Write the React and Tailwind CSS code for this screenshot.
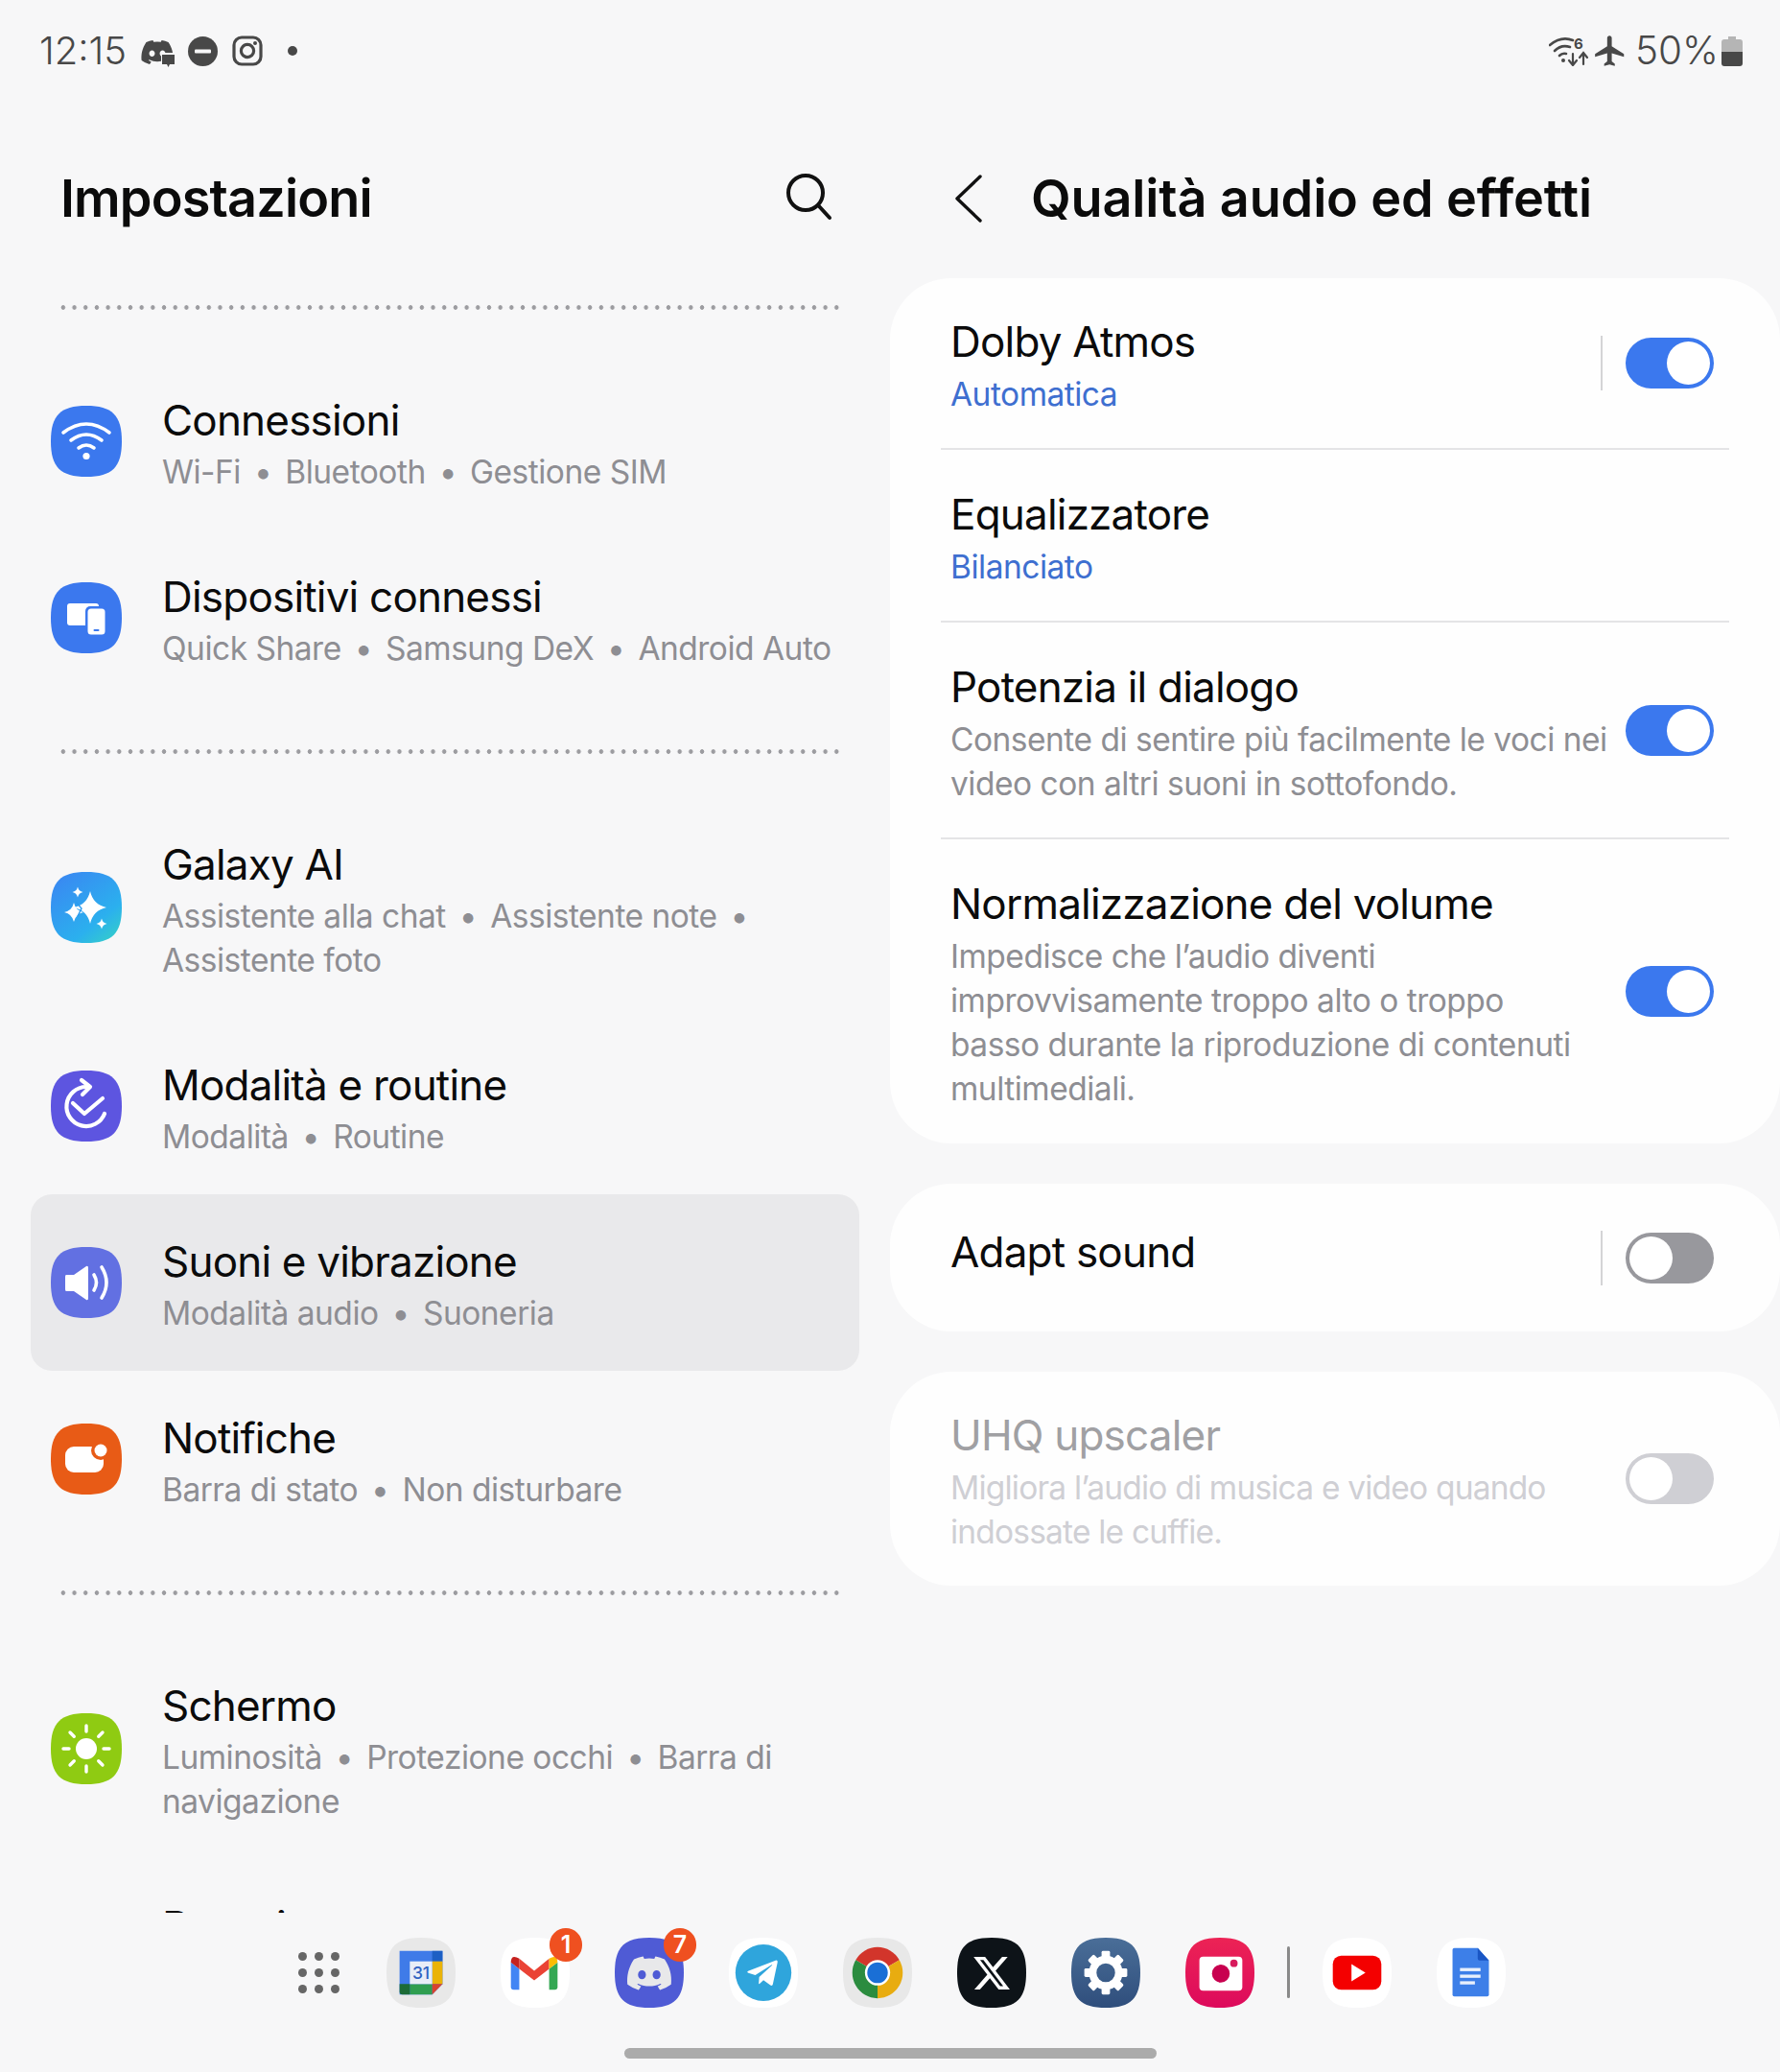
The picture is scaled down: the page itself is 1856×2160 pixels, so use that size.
import React from "react";
import { FaDiscord, FaTelegramPlane } from "react-icons/fa";
import { FaXTwitter } from "react-icons/fa6";
import { MdFlight } from "react-icons/md";

const SQ = "M37 0C64 0 74 10 74 37C74 64 64 74 37 74C10 74 0 64 0 37C0 10 10 0 37 0Z";

function Squircle({ fill = "#fff", size = 74, children, defs, stroke }) {
  return (
    <svg width={size} height={size} viewBox="0 0 74 74" className="shrink-0">
      {defs}
      <path d={SQ} fill={fill} stroke={stroke} strokeWidth={stroke ? 1 : 0} />
      {children}
    </svg>
  );
}

const WifiIcon = () => (
  <Squircle fill="#3b78ee">
    <g fill="none" stroke="#fff" strokeWidth="3.6" strokeLinecap="round">
      <path d="M13 28Q37 10 61 28" />
      <path d="M21 36Q37 24 53 36" />
      <path d="M29 44Q37 38 45 44" />
    </g>
    <circle cx="37" cy="52.5" r="3.6" fill="#fff" />
  </Squircle>
);
const DevicesIcon = () => (
  <Squircle fill="#3b78ee">
    <rect x="17" y="22" width="33" height="23" rx="3" fill="#fff" />
    <rect x="36" y="25" width="23" height="32" rx="5" fill="#3b78ee" />
    <rect x="38.5" y="27.5" width="18" height="27" rx="3.5" fill="#fff" />
    <rect x="44.5" y="49" width="6" height="2" rx="1" fill="#3b78ee" />
  </Squircle>
);
const star = (cx, cy, r) =>
  `M${cx} ${cy - r}Q${cx + r * 0.18} ${cy - r * 0.18} ${cx + r} ${cy}Q${cx + r * 0.18} ${cy + r * 0.18} ${cx} ${cy + r}Q${cx - r * 0.18} ${cy + r * 0.18} ${cx - r} ${cy}Q${cx - r * 0.18} ${cy - r * 0.18} ${cx} ${cy - r}Z`;
const AiIcon = () => (
  <Squircle
    fill="url(#aig)"
    defs={
      <defs>
        <linearGradient id="aig" x1="0.1" y1="0" x2="0.9" y2="1">
          <stop offset="0" stopColor="#3a86f2" />
          <stop offset="0.7" stopColor="#2bb0ee" />
          <stop offset="1" stopColor="#35cfc8" />
        </linearGradient>
      </defs>
    }
  >
    <path d={star(41, 37, 17)} fill="#fff" />
    <path d={star(24, 42, 10)} fill="#fff" />
    <path d={star(28, 21, 5.5)} fill="#fff" />
    <path d={star(53, 54, 5.5)} fill="#fff" />
    <path d="M26 31L32 38L28 46" fill="none" stroke="#2a9bf0" strokeWidth="1.4" />
  </Squircle>
);
const ModesIcon = () => (
  <Squircle fill="#5d55e0">
    <g fill="none" stroke="#fff" strokeWidth="4.2" strokeLinecap="round" strokeLinejoin="round">
      <path d="M37 17A20.5 20.5 0 1 0 56 45" />
      <path d="M32 10L41 17L33 25" />
      <path d="M23 34L35 45L54 29" />
    </g>
  </Squircle>
);
const SoundIcon = () => (
  <Squircle fill="#6270e2">
    <path d="M16 29Q15 29 15 31V44Q15 46 16 46H24L37 55Q39 56 39 53V22Q39 19 37 20L24 29Z" fill="#fff" />
    <g fill="none" stroke="#fff" strokeWidth="3.6" strokeLinecap="round">
      <path d="M45 29Q50 37 45 45" />
      <path d="M53 21Q63 37 53 53" />
    </g>
  </Squircle>
);
const NotifIcon = () => (
  <Squircle fill="#e85b16">
    <rect x="15" y="24" width="40" height="27" rx="9" fill="#fff" />
    <circle cx="52" cy="28" r="10" fill="#e85b16" />
    <circle cx="52" cy="28" r="6.5" fill="#fff" />
  </Squircle>
);
const SunIcon = () => (
  <Squircle fill="#8fcb12">
    <circle cx="37" cy="37" r="11" fill="#fff" />
    {[0, 45, 90, 135, 180, 225, 270, 315].map((a) => (
      <line key={a} x1="37" y1="13" x2="37" y2="19" stroke="#fff" strokeWidth="3.4" strokeLinecap="round" transform={`rotate(${a} 37 37)`} />
    ))}
  </Squircle>
);

function Dotted() {
  return (
    <div className="h-[95px] flex items-center pl-[60px] pr-[50px]">
      <div className="w-full h-[5px] bg-[radial-gradient(circle,#9c9ca0_2px,transparent_2.6px)] [background-size:11.7px_5px]" />
    </div>
  );
}

function Sub({ lines }) {
  return (
    <div className="text-[33.5px] tracking-[-0.5px] leading-[46px] text-[#8e8e93] whitespace-nowrap">
      {lines.map((parts, i) => (
        <div key={i}>
          {parts.map((p, j) => (
            <span key={j}>
              {j > 0 && <span className="inline-block mx-[14px]">•</span>}
              {p}
            </span>
          ))}
          {parts.trail && <span className="inline-block ml-[14px]">•</span>}
        </div>
      ))}
    </div>
  );
}

function Row({ icon, title, lines, tall, selected }) {
  return (
    <div
      className={
        (tall ? "h-[230px] " : "h-[184px] ") +
        (selected ? "bg-[#e9e9eb] " : "") +
        "mx-[32px] pl-[21px] rounded-[22px] flex items-center gap-[42px]"
      }
    >
      {icon}
      <div className="pt-[4px]">
        <div className="text-[44px] tracking-[-0.8px] leading-[56px] text-[#0b0b0b] mb-[3px] whitespace-nowrap">{title}</div>
        <Sub lines={lines} />
      </div>
    </div>
  );
}

function Toggle({ on, disabled }) {
  const track = on ? "bg-[#3b78ee] justify-end" : disabled ? "bg-[#cfcfd4] justify-start" : "bg-[#98989d] justify-start";
  return (
    <div className={"w-[92px] h-[53px] rounded-full flex items-center px-[4px] shrink-0 " + track}>
      <div className="w-[45px] h-[45px] rounded-full bg-white" />
    </div>
  );
}

function SetRow({ h, title, blue, desc, toggle, divider, last, disabled, lift }) {
  return (
    <div className={h + " pl-[10px] pr-[16px] flex items-center justify-between " + (last ? "" : "border-b-2 border-[#e4e4e6]")}>
      <div className={(lift ? "pb-[12px]" : "pt-[5px]") + " whitespace-nowrap"}>
        <div className={"text-[44px] tracking-[-0.8px] leading-[56px] " + (disabled ? "text-[#a0a0a3]" : "text-[#0b0b0b]")}>{title}</div>
        {blue && <div className="mt-[4px] text-[33.5px] tracking-[-0.5px] leading-[46px] text-[#3e6fd0]">{blue}</div>}
        {desc && (
          <div className={"mt-[4px] text-[33.5px] leading-[46px] " + (disabled ? "tracking-[-0.8px] text-[#cfcfd4]" : "tracking-[-0.5px] text-[#8e8e93]")}>
            {desc.map((d) => (
              <div key={d}>{d}</div>
            ))}
          </div>
        )}
      </div>
      {toggle && (
        <div className="flex items-center gap-[24px]">
          {divider && <div className="w-[2px] h-[57px] bg-[#d4d4d6]" />}
          <Toggle on={toggle === "on"} disabled={disabled} />
        </div>
      )}
    </div>
  );
}

function Dock72({ fill, children, overlay, badge, defs }) {
  return (
    <div className="relative w-[72px] h-[73px] shrink-0 flex items-center justify-center">
      <svg width="72" height="73" viewBox="0 0 74 74" preserveAspectRatio="none" className="absolute inset-0">
        {defs}
        <path d={SQ} fill={fill} />
        {children}
      </svg>
      {overlay && <div className="relative flex items-center justify-center">{overlay}</div>}
      {badge && (
        <div className="absolute top-[-10px] right-[-13px] w-[34px] h-[35px] rounded-full bg-[#ef5020] text-white text-[25px] font-semibold leading-none flex items-center justify-center">
          {badge}
        </div>
      )}
    </div>
  );
}

export default function App() {
  return (
    <div className="w-[1856px] h-[2160px] bg-[#f7f7f8] overflow-hidden flex flex-col [font-family:Inter,'Noto_Sans',sans-serif]">
      {/* status bar */}
      <div className="h-[106px] shrink-0 pl-[41px] pr-[39px] flex items-center justify-between text-[#484848]">
        <div className="flex items-center">
          <span className="text-[40px] font-light leading-none w-[105px]">12:15</span>
          <div className="relative w-[36px] h-[30px] flex items-center mt-[3px]">
            <FaDiscord size={37} color="#484848" />
            <svg width="15" height="17" viewBox="0 0 15 17" className="absolute right-[-1px] bottom-[-2px]">
              <rect x="0" y="0" width="15" height="17" fill="#f7f7f8" />
              <path d="M1 2H14V12H9L7.5 15L6 12H1Z" fill="#484848" />
            </svg>
          </div>
          <svg width="31" height="31" viewBox="0 0 31 31" className="ml-[14px]">
            <circle cx="15.5" cy="15.5" r="15.5" fill="#484848" />
            <rect x="7" y="13.5" width="17" height="4" rx="1" fill="#f7f7f8" />
          </svg>
          <svg width="32" height="32" viewBox="0 0 32 32" className="ml-[15px]">
            <rect x="2" y="2" width="28" height="28" rx="8" fill="none" stroke="#484848" strokeWidth="3.2" />
            <circle cx="16" cy="16" r="6.6" fill="none" stroke="#484848" strokeWidth="3.2" />
            <circle cx="24" cy="8" r="2" fill="#484848" />
          </svg>
          <div className="ml-[26px] w-[10px] h-[10px] rounded-full bg-[#484848]" />
        </div>
        <div className="flex items-center">
          <svg width="42" height="32" viewBox="0 0 42 32">
            <g fill="none" stroke="#484848" strokeWidth="2.6" strokeLinecap="round">
              <path d="M1 10Q13 0 25 5" />
              <path d="M6 16Q13 9 22 12" />
              <path d="M11 21Q14 18 18 19" />
              <path d="M25 19V30M21 26L25 31L29 26" strokeWidth="2.2" />
              <path d="M36 30V19M32 23L36 18L40 23" strokeWidth="2.2" />
            </g>
            <circle cx="15" cy="26" r="2" fill="#484848" />
            <text x="26" y="14" fontSize="15" fontWeight="700" fill="#484848" fontFamily="Inter, sans-serif">6</text>
          </svg>
          <MdFlight size={38} color="#484848" className="ml-[3px]" />
          <span className="ml-[7px] text-[40.5px] font-light leading-none w-[88px]">50%</span>
          <svg width="22" height="31" viewBox="0 0 22 31" className="ml-[2px]">
            <path d="M7 0H15V3H19Q22 3 22 6V16H0V6Q0 3 3 3H7Z" fill="#b5b5b5" />
            <path d="M0 16H22V28Q22 31 19 31H3Q0 31 0 28Z" fill="#484848" />
          </svg>
        </div>
      </div>

      {/* main */}
      <div className="h-[1888px] shrink-0 overflow-hidden flex">
        <div className="w-[928px] shrink-0">
          <div className="h-[167px] pt-[34px] pl-[63px] pr-[59px] flex items-center justify-between">
            <div className="text-[54px] leading-none font-semibold text-[#0b0b0b] tracking-[-0.85px]">Impostazioni</div>
            <svg width="50" height="50" viewBox="0 0 50 50" className="mb-[3px]">
              <circle cx="21" cy="21" r="18" fill="none" stroke="#111" strokeWidth="4" />
              <path d="M35 35L46 47" fill="none" stroke="#111" strokeWidth="4" strokeLinecap="round" />
            </svg>
          </div>
          <Dotted />
          <Row icon={<WifiIcon />} title="Connessioni" lines={[["Wi-Fi", "Bluetooth", "Gestione SIM"]]} />
          <Row icon={<DevicesIcon />} title="Dispositivi connessi" lines={[["Quick Share", "Samsung DeX", "Android Auto"]]} />
          <Dotted />
          <Row
            icon={<AiIcon />}
            tall
            title="Galaxy AI"
            lines={[Object.assign(["Assistente alla chat", "Assistente note"], { trail: true }), ["Assistente foto"]]}
          />
          <Row icon={<ModesIcon />} title="Modalità e routine" lines={[["Modalità", "Routine"]]} />
          <Row icon={<SoundIcon />} selected title="Suoni e vibrazione" lines={[["Modalità audio", "Suoneria"]]} />
          <Row icon={<NotifIcon />} title="Notifiche" lines={[["Barra di stato", "Non disturbare"]]} />
          <Dotted />
          <Row
            icon={<SunIcon />}
            tall
            title="Schermo"
            lines={[["Luminosità", "Protezione occhi", "Barra di"], ["navigazione"]]}
          />
          <Row icon={<div className="w-[74px] h-[74px]" />} title="Batteria" lines={[["\u00a0"]]} />
        </div>

        <div className="w-[928px] shrink-0">
          <div className="h-[184px] pt-[18px] flex items-center">
            <svg width="30" height="50" viewBox="0 0 30 50" className="ml-[67px]">
              <path d="M27 2L3 25L27 48" fill="none" stroke="#111" strokeWidth="3.4" strokeLinecap="round" strokeLinejoin="round" />
            </svg>
            <div className="ml-[50px] text-[54px] leading-none font-semibold text-[#0b0b0b] tracking-[-0.15px] whitespace-nowrap">Qualità audio ed effetti</div>
          </div>
          <div className="flex flex-col gap-[42px]">
            <div className="bg-[#fefefe] rounded-[64px] px-[53px]">
              <SetRow h="h-[179px]" title="Dolby Atmos" blue="Automatica" toggle="on" divider />
              <SetRow h="h-[180px]" title="Equalizzatore" blue="Bilanciato" />
              <SetRow
                h="h-[226px]"
                title="Potenzia il dialogo"
                desc={["Consente di sentire più facilmente le voci nei", "video con altri suoni in sottofondo."]}
                toggle="on"
              />
              <SetRow
                h="h-[317px]"
                last
                title="Normalizzazione del volume"
                desc={[
                  "Impedisce che l’audio diventi",
                  "improvvisamente troppo alto o troppo",
                  "basso durante la riproduzione di contenuti",
                  "multimediali.",
                ]}
                toggle="on"
              />
            </div>
            <div className="bg-[#fefefe] rounded-[64px] px-[53px]">
              <SetRow h="h-[154px]" last lift title="Adapt sound" toggle="off" divider />
            </div>
            <div className="bg-[#fefefe] rounded-[64px] px-[53px]">
              <SetRow
                h="h-[223px]"
                last
                disabled
                title="UHQ upscaler"
                desc={["Migliora l’audio di musica e video quando", "indossate le cuffie."]}
                toggle="off"
              />
            </div>
          </div>
        </div>
      </div>

      {/* dock */}
      <div className="h-[141px] shrink-0 pt-[26px] pl-[311px] flex items-start">
        <div className="w-[43px] h-[73px] grid grid-cols-3 gap-x-[8px] content-center gap-y-[8px] shrink-0">
          {[1, 2, 3, 4, 5, 6, 7, 8, 9].map((d) => (
            <div key={d} className="w-[9px] h-[9px] rounded-full bg-[#666666]" />
          ))}
        </div>
        <div className="ml-[49px] flex gap-[47px]">
          <Dock72 fill="#e8e8e8">
            <path d="M14 14H60V49L49 60H14Z" fill="#3f7be8" />
            <path d="M49 14H60V25H49Z" fill="#1d5fc4" />
            <path d="M49 25H60V49H49Z" fill="#eab308" />
            <path d="M25 49H49V60H25Z" fill="#2f9e50" />
            <path d="M14 49H25V60H17Q14 60 14 57Z" fill="#1c6b36" />
            <path d="M49 49H60L49 60Z" fill="#d9432f" />
            <rect x="25" y="25" width="24" height="24" fill="#e8edf7" />
            <text x="37" y="44" textAnchor="middle" fontSize="18" fontWeight="500" fill="#2f62c2" fontFamily="Inter, sans-serif">31</text>
          </Dock72>
          <Dock72 fill="#ffffff" badge="1">
            <path d="M11 26V52Q11 55 14 55H20V33Z" fill="#4285f4" />
            <path d="M52 33V55H58Q61 55 61 52V26Z" fill="#34a853" />
            <path d="M20 33L36 45L52 33V22L36 35L20 22Z" fill="#ea4335" />
            <path d="M11 26Q11 17 20 22V33Z" fill="#c5221f" />
            <path d="M52 22Q61 17 61 26L52 33Z" fill="#fbbc04" />
          </Dock72>
          <Dock72 fill="#4f5bd5" badge="7" overlay={<FaDiscord size={50} color="#e8e8ea" />} />
          <Dock72 fill="#ffffff" overlay={<FaTelegramPlane size={36} color="#ffffff" className="mr-[3px]" />}>
            <circle cx="37" cy="37" r="30" fill="#2fa5dc" />
          </Dock72>
          <Dock72 fill="#e8e8e8">
            <path d="M37 37L13.6 23.5A27 27 0 0 1 60.4 23.5Z" fill="#d2352b" />
            <path d="M37 37L60.4 23.5A27 27 0 0 1 37 64Z" fill="#e8ac10" />
            <path d="M37 37L37 64A27 27 0 0 1 13.6 23.5Z" fill="#2b8c3f" />
            <circle cx="37" cy="37" r="13.5" fill="#fff" />
            <circle cx="37" cy="37" r="11" fill="#1a6fd6" />
          </Dock72>
          <Dock72 fill="#0d1318" overlay={<FaXTwitter size={42} color="#ffffff" />} />
          <Dock72
            fill="url(#setg)"
            defs={
              <defs>
                <linearGradient id="setg" x1="0" y1="0" x2="0" y2="1">
                  <stop offset="0" stopColor="#4a6e98" />
                  <stop offset="1" stopColor="#2f4e7c" />
                </linearGradient>
              </defs>
            }
          >
            <circle cx="37" cy="37" r="14" fill="none" stroke="#fff" strokeWidth="8" />
            {[0, 45, 90, 135, 180, 225, 270, 315].map((a) => (
              <rect key={a} x="32.5" y="14" width="9" height="8" rx="1.5" fill="#fff" transform={`rotate(${a} 37 37)`} />
            ))}
          </Dock72>
          <Dock72
            fill="url(#camg)"
            defs={
              <defs>
                <linearGradient id="camg" x1="0" y1="0" x2="0" y2="1">
                  <stop offset="0" stopColor="#ec2355" />
                  <stop offset="1" stopColor="#dd0a5c" />
                </linearGradient>
              </defs>
            }
          >
            <rect x="15" y="20" width="46" height="36" rx="4" fill="#fff" />
            <circle cx="38" cy="38" r="9.5" fill="#c8004f" />
            <circle cx="52" cy="27" r="4" fill="#d81a5c" />
          </Dock72>
        </div>
        <div className="ml-[34px] mt-[9px] w-[3px] h-[54px] rounded-full bg-[#8a8a8a] shrink-0" />
        <div className="ml-[34px] flex gap-[47px]">
          <Dock72 fill="#ffffff">
            <rect x="11" y="19" width="52" height="36" rx="9" fill="#f40000" />
            <path d="M31 28L46 37L31 46Z" fill="#fff" />
          </Dock72>
          <Dock72 fill="#ffffff">
            <path d="M19 11H44L56 24V60Q56 62 54 62H19Q17 62 17 60V13Q17 11 19 11Z" fill="#3d7fe8" />
            <path d="M44 11L56 24H46Q44 24 44 22Z" fill="#1a56c4" />
            <rect x="25" y="32" width="22" height="3.4" fill="#e8f0fc" />
            <rect x="25" y="39" width="22" height="3.4" fill="#e8f0fc" />
            <rect x="25" y="46" width="16" height="3.4" fill="#e8f0fc" />
          </Dock72>
        </div>
      </div>
      <div className="mx-auto w-[555px] h-[11px] rounded-full bg-[#ababab]" />
    </div>
  );
}
